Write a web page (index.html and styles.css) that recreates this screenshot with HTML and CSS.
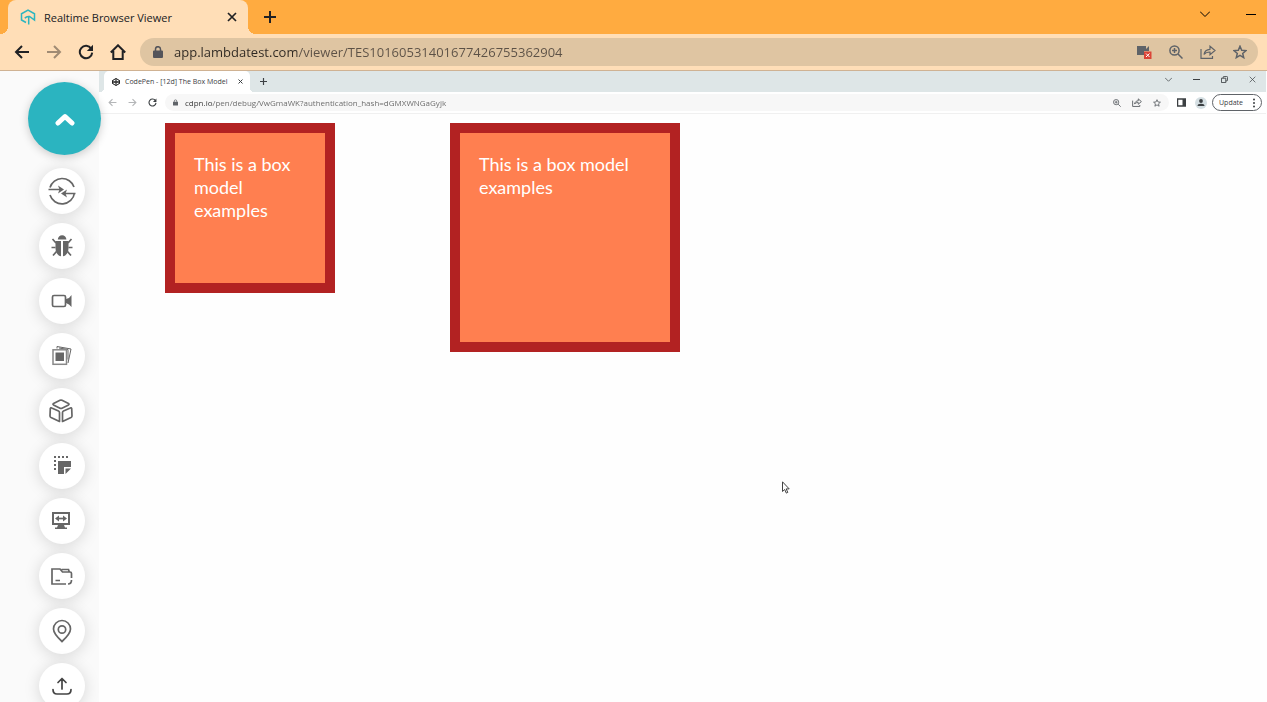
FILE: index.html
```html
<!DOCTYPE html>
<html lang="en">
<head>
    <meta charset="utf-8">
    <title>Realtime Browser Viewer</title>
    <link rel="stylesheet" href="styles.css">
</head>
<body>
    <!-- shared icons -->
    <svg class="defs" aria-hidden="true">
        <symbol id="arrow" viewBox="0 0 16 16"><path d="M15 8H2M8 2L2 8l6 6"/></symbol>
        <symbol id="reload" viewBox="0 0 16 16"><path d="M13.2 4.6A6.2 6.2 0 1 0 14.2 8.6"/><path class="solid" d="M15 .8V7H8.800z"/></symbol>
        <symbol id="close" viewBox="0 0 10 10"><path d="M1 1l8 8M9 1L1 9"/></symbol>
        <symbol id="plus" viewBox="0 0 12 12"><path d="M6 0v12M0 6h12"/></symbol>
        <symbol id="chevron" viewBox="0 0 10 6"><path d="M0 .5l5 5 5-5"/></symbol>
        <symbol id="lock" viewBox="0 0 10 12"><path class="solid" d="M1 4.500h8a1 1 0 0 1 1 1V11a1 1 0 0 1-1 1H1a1 1 0 0 1-1-1V5.500a1 1 0 0 1 1-1z"/><path d="M2.500 5V3.200a2.500 2.500 0 0 1 5 0V5"/></symbol>
        <symbol id="zoomin" viewBox="0 0 14 14"><circle cx="5.500" cy="5.500" r="4.600"/><path d="M9 9l4.500 4.500M5.500 3v5M3 5.500h5"/></symbol>
        <symbol id="share" viewBox="0 0 16 14"><path d="M1 4v9.300h11.500V11M4 9.500c.6-3.500 2.800-5 6-5.200V1.200L15 5.500 10 9.800V7C7.500 7 5.500 7.600 4 9.500z"/></symbol>
        <symbol id="star" viewBox="0 0 14 14"><path d="M7 1.200l1.700 4 4.300.4-3.300 2.800 1 4.200L7 10.300l-3.700 2.300 1-4.200L1 5.600l4.300-.4z"/></symbol>
    </svg>

    <header class="browser">
        <div class="tabstrip">
            <div class="tab">
                <svg class="favicon" viewBox="0 0 16 16"><path d="M6 13.500L1.500 11V4.800L8 1l6.500 3.800V11L9.500 7.500Q6.500 7 4.800 9.200M8.700 8v7.500"/></svg>
                <span class="tab-title">Realtime Browser Viewer</span>
                <button class="tab-close" aria-label="Close tab"><svg><use href="#close"/></svg></button>
            </div>
            <button class="new-tab" aria-label="New tab"><svg><use href="#plus"/></svg></button>
            <div class="window-controls">
                <button aria-label="Search tabs"><svg class="chev"><use href="#chevron"/></svg></button>
                <button aria-label="Minimize"><svg class="min" viewBox="0 0 10 1"><path d="M0 .500h10"/></svg></button>
            </div>
        </div>
        <div class="toolbar">
            <button aria-label="Back"><svg class="nav"><use href="#arrow"/></svg></button>
            <button class="off" aria-label="Forward"><svg class="nav flip"><use href="#arrow"/></svg></button>
            <button aria-label="Reload"><svg class="nav"><use href="#reload"/></svg></button>
            <button aria-label="Home"><svg class="nav" viewBox="0 0 16 16"><path d="M.800 8.500L8 1.300l7.200 7.200M3.300 7v8h9.400V7"/></svg></button>
            <div class="omnibox">
                <svg class="lock"><use href="#lock"/></svg>
                <input class="url" type="text" aria-label="Address" value="app.lambdatest.com/viewer/TES10160531401677426755362904">
                <button aria-label="Camera blocked"><svg class="camera" viewBox="0 0 14 13"><path class="solid" d="M0 0h9v3l3-3v5H7v4H0z"/><path class="badge" d="M7 5.500h7.500V13H7z"/><path class="cross" d="M9 7.500l3.500 3.500M12.500 7.500L9 11"/></svg></button>
                <button aria-label="Zoom"><svg><use href="#zoomin"/></svg></button>
                <button aria-label="Share"><svg class="share"><use href="#share"/></svg></button>
                <button aria-label="Bookmark"><svg><use href="#star"/></svg></button>
            </div>
        </div>
    </header>

    <div class="viewer">
        <nav class="sidebar">
            <button class="toggle" aria-label="Collapse menu"><svg viewBox="0 0 20 14"><path d="M3 11l7-6.500 7 6.500"/></svg></button>
            <button class="tool" aria-label="Switch"><svg viewBox="0 0 28 28"><path d="M2 10.500A12.600 12.600 0 0 1 26 10M2 18A12.600 12.600 0 0 0 26.500 16M.500 12.500H12M27.500 16.500H16"/><path class="solid" d="M10 8.500l6 4-6 4 1.500-4zM19 12.500l-6 4 6 4-1.500-4z"/></svg></button>
            <button class="tool" aria-label="Mark as bug"><svg viewBox="0 0 28 28"><path class="solid" d="M9.800 7.500a4.300 4.300 0 0 1 8.600 0zM7.500 9h5.500v15.300c-3.700-.8-5.500-4-5.500-8zM15 9h5.500v7.300c0 4-1.800 7.200-5.500 8z"/><path d="M8 11L4.500 7M20 11l3.500-4M7.500 15.500h-4M20.500 15.500h4M8.500 19.500L5 23.500M19.500 19.500l3.500 4"/></svg></button>
            <button class="tool" aria-label="Record session"><svg viewBox="0 0 28 28"><rect x="4.500" y="8.500" width="13" height="11" rx="1.500"/><path class="solid" d="M18 12l3-1 2.500-3v12L21 17.500 18 16z"/></svg></button>
            <button class="tool" aria-label="Gallery"><svg viewBox="0 0 28 28"><path class="thin" d="M9 6.500V4.500l14 2.500-3 14M11 6l9 1.500v10"/><rect class="frame" x="5" y="7.800" width="13.500" height="14.500"/><path class="solid" d="M7.500 10.500h8.500v8.500H7.500z"/></svg></button>
            <button class="tool" aria-label="Project"><svg class="round" viewBox="0 0 28 28"><path d="M12 3.300q1-.5 2 0l6.500 3.200q1 .7 0 1.400L14 11.200q-1 .4-2 0L5.500 7.900q-1-.7 0-1.400zM3.700 11l6.800 3q1 .5 1 1.500v9l-8.500-4q-1-.5-1-1.500l.3-7.500q.4-1 1.400-.5zM22.300 11l-6.800 3q-1 .5-1 1.500v9l8.500-4q1-.5 1-1.500l-.3-7.500q-.4-1-1.400-.5z"/></svg></button>
            <button class="tool" aria-label="Screenshot"><svg viewBox="0 0 28 28"><path class="dots" d="M6 5h14M7 8v11"/><path class="solid" d="M10 9h13v6h-7v7h-6zM17.500 16.500H23l-5.500 5.500z"/></svg></button>
            <button class="tool" aria-label="Resolution"><svg viewBox="0 0 28 28"><rect class="screen" x="5" y="6" width="16" height="11"/><path d="M9 11.500h8"/><path class="solid" d="M11 8.500v6l-4-3zM15 8.500v6l4-3zM10 18h6l1 2.500h2V22H7v-1.500h2z"/></svg></button>
            <button class="tool" aria-label="Files"><svg viewBox="0 0 28 28"><path d="M12.500 7H4v15h14M12 7l2.500 3H22q1.500 0 1.500 1.500V16M13.500 7.500h7l.8 2.500M23.500 18q0 4-3.500 4M7.500 18.500H12"/></svg></button>
            <button class="tool" aria-label="Location"><svg viewBox="0 0 28 28"><path d="M14 24.500C8 19 5.500 16 5.500 12a8.500 8.500 0 0 1 17 0c0 4-2.500 7-8.500 12.500z"/><circle cx="14" cy="12.500" r="3.700"/></svg></button>
            <button class="tool upload" aria-label="Upload"><svg class="round" viewBox="0 0 28 28"><path d="M14 17V6.500M10 10.500l4-4 4 4M5 17.500q0 4.500 4 4.500h10q4 0 4-4.500"/></svg></button>
        </nav>

        <main class="remote">
            <div class="tabstrip">
                <div class="tab">
                    <svg class="favicon" viewBox="0 0 8 8"><path d="M4 .5l3.500 2v3l-3.500 2-3.500-2v-3zM.500 2.500L4 5l3.500-2.500M.500 5.500L4 3l3.500 2.500M4 .500V3M4 5v2.500"/></svg>
                    <span class="tab-title">CodePen - [12d] The Box Model</span>
                    <button class="tab-close" aria-label="Close tab"><svg><use href="#close"/></svg></button>
                </div>
                <button class="new-tab" aria-label="New tab"><svg><use href="#plus"/></svg></button>
                <div class="window-controls">
                    <button aria-label="Search tabs"><svg class="chev"><use href="#chevron"/></svg></button>
                    <button aria-label="Minimize"><svg class="min" viewBox="0 0 7 7"><path d="M0 3.500h7"/></svg></button>
                    <button aria-label="Restore"><svg viewBox="0 0 8 8"><path d="M.500 2.500h5v5h-5zM2.500 2.500v-1q0-1 1-1h3q1 0 1 1v3q0 1-1 1h-1"/></svg></button>
                    <button aria-label="Close"><svg><use href="#close"/></svg></button>
                </div>
            </div>
            <div class="toolbar">
                <button class="off" aria-label="Back"><svg class="nav"><use href="#arrow"/></svg></button>
                <button class="off" aria-label="Forward"><svg class="nav flip"><use href="#arrow"/></svg></button>
                <button aria-label="Reload"><svg class="nav"><use href="#reload"/></svg></button>
                <div class="omnibox">
                    <svg class="lock"><use href="#lock"/></svg>
                    <input class="url" type="text" aria-label="Remote address" value="cdpn.io/pen/debug/VwGmaWK?authentication_hash=dGMXWNGaGyjk">
                    <button aria-label="Zoom"><svg><use href="#zoomin"/></svg></button>
                    <button aria-label="Share"><svg class="share"><use href="#share"/></svg></button>
                    <button aria-label="Bookmark"><svg><use href="#star"/></svg></button>
                </div>
                <button class="panel" aria-label="Side panel"><svg viewBox="0 0 9 9"><path d="M.500 1h8v7h-8z"/><path class="solid" d="M5.500 1H9v7H5.500z"/></svg></button>
                <button class="profile" aria-label="Profile"><svg viewBox="0 0 12 12"><circle class="disc" cx="6" cy="6" r="6"/><circle class="solid" cx="6" cy="4" r="1.900"/><path class="solid" d="M2.500 9q0-2.200 3.500-2.200T9.500 9z"/></svg></button>
                <button class="update">Update <svg viewBox="0 0 2 10"><circle cx="1" cy="1.500" r="1"/><circle cx="1" cy="5" r="1"/><circle cx="1" cy="8.500" r="1"/></svg></button>
            </div>
            <div class="page">
                <div class="box">This is a box model examples</div>
                <div class="box large">This is a box model examples</div>
                <svg class="cursor" viewBox="0 0 8 13"><path d="M.500 .800v9.700l2.200-2 1.600 3.600 1.500-.7-1.600-3.500h3z"/></svg>
            </div>
        </main>
    </div>
</body>
</html>
```

FILE: styles.css
```css
* { box-sizing: border-box; }
body { margin: 0; height: 100vh; display: flex; flex-direction: column; overflow: hidden; font-family: "Open Sans", sans-serif; background: #fefefe; }
button { display: flex; align-items: center; justify-content: center; padding: 0; border: none; background: none; color: inherit; font-family: inherit; cursor: pointer; flex-shrink: 0; }
svg { display: block; flex-shrink: 0; fill: none; stroke: currentColor; }
.solid { fill: currentColor; stroke: none; }
.defs { position: absolute; width: 0; height: 0; }
.flip { transform: scaleX(-1); }
.round { stroke-linecap: round; stroke-linejoin: round; }

/* tab strip and toolbar, shared by both browsers */
.tabstrip { display: flex; align-items: stretch; }
.tab { position: relative; display: flex; align-items: center; }
.tab::before, .tab::after { content: ""; position: absolute; bottom: 0; width: 8px; height: 8px; }
.tab::before { right: 100%; background: radial-gradient(circle at 0 0, transparent 8px, var(--bar) 8px); }
.tab::after { left: 100%; background: radial-gradient(circle at 100% 0, transparent 8px, var(--bar) 8px); }
.tab-title { flex: 1; white-space: nowrap; }
.window-controls { display: flex; margin-left: auto; }
.toolbar { display: flex; align-items: center; }
.omnibox { flex: 1; display: flex; align-items: center; }
.url { flex: 1; min-width: 0; padding: 0; border: none; outline: none; color: transparent; font-family: inherit; -webkit-background-clip: text; background-clip: text; }

.browser { --bar: #ffdeb7; color: #202124; }
.browser .tabstrip { height: 34px; padding-left: 8px; background: #ffab40; }
.browser .tab { width: 240px; padding: 0 9px 0 12px; background: var(--bar); border-radius: 8px 8px 0 0; font-size: 11px; }
.browser .favicon { width: 16px; height: 16px; margin-right: 8px; color: #2cb5c0; stroke-width: 1.5; }
.browser .tab-close svg { width: 10px; height: 10px; margin: 2px; stroke-width: 1.7; }
.browser .new-tab { width: 44px; }
.browser .new-tab svg { width: 12px; height: 12px; stroke-width: 2; }
.browser .window-controls { height: 28px; color: #000; }
.browser .window-controls button { width: 46px; }
.browser .window-controls button:last-child { width: 32px; margin-left: 7px; }
.browser .chev { width: 10px; height: 6px; }
.browser .min { width: 10px; height: 1px; }
.browser .toolbar { height: 37px; padding: 0 9px 0 6px; background: var(--bar); border-bottom: 1px solid #cfb293; }
.browser .toolbar button { width: 32px; height: 28px; }
.browser .toolbar svg { width: 14px; height: 14px; stroke-width: 1.5; }
.browser .toolbar .nav { width: 16px; height: 16px; stroke-width: 2; }
.browser .toolbar .off { color: #a08b74; }
.browser .omnibox { height: 28px; margin-left: 6px; padding: 0 2px 0 13px; border-radius: 14px; background: #dfc5a2; color: #5f6368; }
.browser .omnibox .lock { width: 10px; height: 12px; margin-right: 11px; color: #54545a; }
.browser .omnibox .share { width: 16px; stroke-width: 1.2; }
.browser .omnibox .camera { height: 13px; overflow: visible; }
.badge { fill: #db4437; stroke: none; }
.cross { stroke: #fff; stroke-width: 1; }
.browser .url { height: 28px; font-size: 13px; background-image: linear-gradient(to right, #2e2822 123px, #5c5146 123px); }

.viewer { flex: 1; min-height: 0; display: flex; }

.sidebar { width: 99px; padding-top: 11px; flex-shrink: 0; background: #fafafa; }
.sidebar button { border-radius: 50%; }
.toggle { position: relative; z-index: 1; width: 73px; height: 73px; margin: 0 0 13px 28px; background: #2bb4c0; color: #fff; box-shadow: 0 2px 10px rgba(0, 0, 0, .2); }
.toggle svg { width: 20px; height: 14px; stroke-width: 5; stroke-linecap: round; stroke-linejoin: round; }
.tool { width: 46px; height: 46px; margin: 0 0 9px 39px; background: #fff; color: #666; box-shadow: 0 2px 16px rgba(0, 0, 0, .15); }
.tool svg { width: 28px; height: 28px; stroke-width: 1.7; }
.tool .thin { stroke-width: 1; }
.tool .frame { stroke: #888; stroke-width: 1.5; }
.tool .screen { stroke-width: 2; }
.tool .dots { stroke-width: 2; stroke-dasharray: 2 2; }
.upload { color: #444; }

.remote { --bar: #fff; position: relative; flex: 1; min-width: 0; padding-right: 1px; background: #fefefe; color: #3c4043; }
.remote .tabstrip { height: 21px; padding-left: 5px; background: #dee6e7; }
.remote .tab { width: 146px; padding: 0 6px 0 8px; background: var(--bar); border-radius: 5px 5px 0 0; font-size: 7px; }
.remote .tab::before, .remote .tab::after { width: 4px; height: 4px; }
.remote .tab::before { background: radial-gradient(circle at 0 0, transparent 4px, var(--bar) 4px); }
.remote .tab::after { background: radial-gradient(circle at 100% 0, transparent 4px, var(--bar) 4px); }
.remote .favicon { width: 8px; height: 8px; margin-right: 5px; color: #222; }
.remote .tab-close svg { width: 5px; height: 5px; margin: 1px; stroke-width: 2; }
.remote .new-tab { width: 26px; }
.remote .new-tab svg { width: 7px; height: 7px; stroke-width: 2; }
.remote .window-controls { height: 17px; }
.remote .window-controls button { width: 28px; }
.remote .window-controls svg { width: 7px; height: 7px; }
.remote .window-controls .chev { height: 5px; }
.remote .toolbar { height: 22px; padding: 0 4px 0 3px; background: var(--bar); border-bottom: 1px solid #f0f0f0; }
.remote .toolbar button { width: 20px; height: 17px; }
.remote .toolbar svg { width: 8px; height: 8px; stroke-width: 1.5; }
.remote .toolbar .nav { width: 9px; height: 9px; stroke-width: 2; }
.remote .toolbar .off { color: #b4b6b8; }
.remote .omnibox { height: 17px; margin-left: 3px; padding: 0 2px 0 8px; border-radius: 9px; background: #f7f7f7; color: #5f6368; }
.remote .omnibox .lock { width: 5px; height: 7px; margin-right: 7px; }
.remote .omnibox .share { width: 10px; height: 9px; }
.remote .url { height: 17px; font-size: 8px; background-image: linear-gradient(to right, #333 28px, #666 28px); }
.remote .panel { margin-left: 2px; }
.remote .toolbar .panel svg { width: 9px; height: 9px; }
.remote .toolbar .profile svg { width: 12px; height: 12px; }
.disc { fill: #d5dfe3; stroke: none; }
.remote .toolbar .update { width: 50px; margin-left: 1px; padding: 0 6px; justify-content: space-between; border: 1px solid #5f6368; border-radius: 9px; font-size: 7px; }
.remote .toolbar .update svg { width: 2px; height: 10px; fill: currentColor; stroke: none; }

.page { display: flex; align-items: flex-start; gap: 115px; padding: 9px 0 0 66px; }
.box { width: 170px; height: 170px; padding: 20px 19px; border: 10px solid #b22222; background: #ff7f50; color: #fff; font-family: Lato, sans-serif; font-size: 18px; line-height: 23px; }
.large { width: 230px; height: 229px; }
/* remote mouse pointer */
.cursor { position: absolute; left: 683px; top: 410px; width: 8px; height: 13px; color: #444; fill: #fff; }
```
